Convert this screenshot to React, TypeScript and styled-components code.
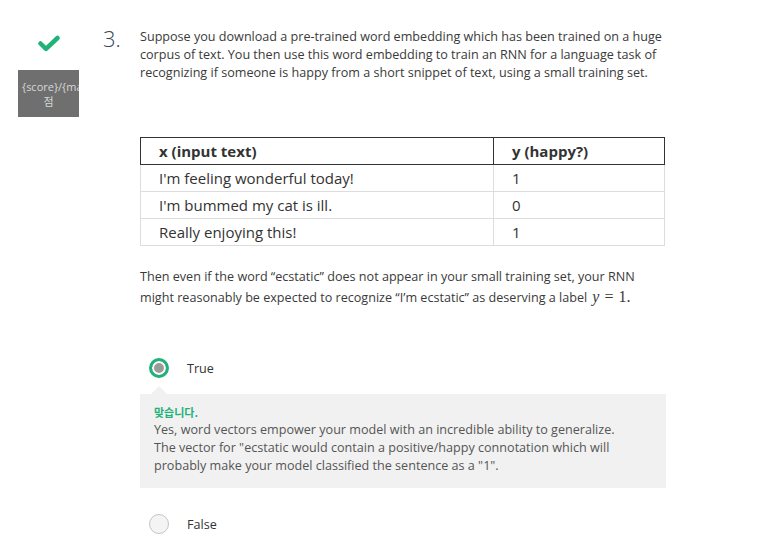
import React from "react";
import styled, { createGlobalStyle } from "styled-components";

const Global = createGlobalStyle`
  html, body { margin: 0; padding: 0; background: #fff; }
  body { font-family: "Open Sans", "Noto Sans CJK KR", sans-serif; color: #333; }
`;

const Page = styled.div`
  display: flex;
  align-items: flex-start;
  padding: 28px 0 0 18px;
`;

const Sidebar = styled.div`
  width: 61px;
  display: flex;
  flex-direction: column;
  align-items: center;
`;

const CheckWrap = styled.div`
  height: 22px;
  margin-top: 4px;
  display: flex;
  align-items: center;
  justify-content: center;
`;

const ScoreBox = styled.div`
  margin-top: 16px;
  width: 61px;
  height: 47px;
  background: #6f6f6f;
  color: #d8d8d8;
  font-size: 11px;
  line-height: 15px;
  display: flex;
  flex-direction: column;
  align-items: center;
  justify-content: center;
  overflow: hidden;
`;

const ScoreLine = styled.div<{ left?: boolean }>`
  white-space: nowrap;
  align-self: ${(p) => (p.left ? "flex-start" : "center")};
  padding-left: ${(p) => (p.left ? "4px" : "0")};
`;

const Number = styled.div`
  width: 37px;
  padding-left: 24px;
  font-size: 22px;
  font-weight: 300;
  line-height: 22px;
  color: #3a4656;
  margin-top: -1px;
`;

const Content = styled.div`
  width: 526px;
  display: flex;
  flex-direction: column;
`;

const Para = styled.p<{ lh: number }>`
  margin: 0;
  font-size: 12.6px;
  line-height: ${(p) => p.lh}px;
  color: #3a3a3a;
`;

const Table = styled.table`
  margin-top: 55px;
  width: 525px;
  border-collapse: collapse;
  font-size: 15px;
  color: #333;
`;

const Th = styled.th<{ w?: number }>`
  text-align: left;
  font-weight: 700;
  height: 26px;
  padding: 0 0 0 18px;
  border: 1px solid #333;
  width: ${(p) => (p.w ? `${p.w}px` : "auto")};
  line-height: 20px;
`;

const Td = styled.td`
  height: 26px;
  padding: 0 0 0 18px;
  border: 1px solid #ddd;
  line-height: 20px;
`;

const Para2 = styled(Para)`
  margin-top: 21px;
`;

const MathY = styled.span`
  font-family: "Liberation Serif", serif;
  font-style: italic;
  font-size: 16px;
  margin-left: 5px;
`;

const MathOp = styled.span`
  font-family: "Liberation Serif", serif;
  font-size: 16px;
  margin: 0 5px;
`;

const MathNum = styled.span`
  font-family: "Liberation Serif", serif;
  font-size: 16px;
`;

const Option = styled.div<{ mt: number }>`
  display: flex;
  align-items: center;
  height: 20px;
  margin-top: ${(p) => p.mt}px;
  padding-left: 9px;
  font-size: 12.6px;
  color: #333;
`;

const Radio = styled.span<{ checked?: boolean }>`
  box-sizing: border-box;
  width: 20px;
  height: 20px;
  border-radius: 50%;
  margin-right: 18px;
  flex: none;
  ${(p) =>
    p.checked
      ? `border: 3px solid #1fb37a; background: #9b9b9b; box-shadow: inset 0 0 0 2px #fff;`
      : `border: 1px solid #c4c4c4; background: #f4f4f4;`}
`;

const Feedback = styled.div`
  position: relative;
  margin-top: 16px;
  background: #f1f1f1;
  padding: 9px 50px 13px 14px;
  font-size: 12.6px;
  line-height: 18px;
  color: #555;
  &::before {
    content: "";
    position: absolute;
    top: -8px;
    left: 11px;
    border-left: 8px solid transparent;
    border-right: 8px solid transparent;
    border-bottom: 8px solid #f1f1f1;
  }
`;

const FeedbackTitle = styled.div`
  font-family: "Noto Sans CJK KR", "Open Sans", sans-serif;
  font-weight: 700;
  font-size: 11px;
  color: #1fb37a;
  line-height: 18px;
`;

const CheckIcon = () => (
  <svg width="22" height="17" viewBox="0 0 22 17">
    <path d="M2.5 8.5 L8 13.8 L19.5 3" fill="none" stroke="#1fb37a" strokeWidth="4.5" strokeLinecap="round" strokeLinejoin="round" />
  </svg>
);

export default function App() {
  return (
    <>
      <Global />
      <Page>
        <Sidebar>
          <CheckWrap>
            <CheckIcon />
          </CheckWrap>
          <ScoreBox>
            <ScoreLine left>{"{score}/{maxScore}"}</ScoreLine>
            <ScoreLine>점</ScoreLine>
          </ScoreBox>
        </Sidebar>
        <Number>3.</Number>
        <Content>
          <Para lh={18}>
            Suppose you download a pre-trained word embedding which has been trained on a huge corpus of text. You
            then use this word embedding to train an RNN for a language task of recognizing if someone is happy from a
            short snippet of text, using a small training set.
          </Para>
          <Table>
            <thead>
              <tr>
                <Th w={334}>x (input text)</Th>
                <Th>y (happy?)</Th>
              </tr>
            </thead>
            <tbody>
              <tr>
                <Td>I'm feeling wonderful today!</Td>
                <Td>1</Td>
              </tr>
              <tr>
                <Td>I'm bummed my cat is ill.</Td>
                <Td>0</Td>
              </tr>
              <tr>
                <Td>Really enjoying this!</Td>
                <Td>1</Td>
              </tr>
            </tbody>
          </Table>
          <Para2 lh={20}>
            Then even if the word “ecstatic” does not appear in your small training set, your RNN might reasonably be
            expected to recognize “I’m ecstatic” as deserving a label<MathY>y</MathY>
            <MathOp>=</MathOp>
            <MathNum>1.</MathNum>
          </Para2>
          <Option mt={50}>
            <Radio checked />
            True
          </Option>
          <Feedback>
            <FeedbackTitle>맞습니다.</FeedbackTitle>
            Yes, word vectors empower your model with an incredible ability to generalize. The vector for "ecstatic
            would contain a positive/happy connotation which will probably make your model classified the sentence as a
            "1".
          </Feedback>
          <Option mt={26}>
            <Radio />
            False
          </Option>
        </Content>
      </Page>
    </>
  );
}
